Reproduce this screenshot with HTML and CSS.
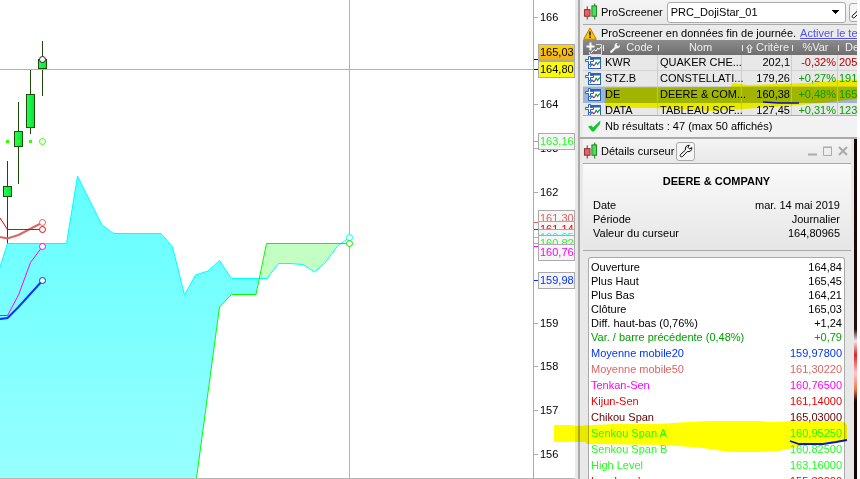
FILE: index.html
```html
<!DOCTYPE html>
<html lang="fr">
<head>
  <meta charset="UTF-8" />
  <meta name="viewport" content="width=device-width, initial-scale=1.0"/>
  <title>ProScreener - DEERE &amp; COMPANY</title>
  <link rel="stylesheet" href="styles.css">
</head>
<body>

<!-- Icônes communes -->
<svg class="defs" aria-hidden="true">
  <symbol id="bougies" viewBox="0 0 16 18">
    <path d="M4.500 3v14" stroke="#7a2020"/>
    <rect x="1.500" y="6.500" width="6" height="7" fill="#e06464" stroke="#8c2828"/>
    <path d="M12.500 0v17" stroke="#1c641c"/>
    <rect x="9.500" y="2.500" width="5" height="11" fill="#4be05a" stroke="#1c781c"/>
  </symbol>
  <symbol id="cle" viewBox="0 0 14 14">
    <path d="M1.500 10.500L6.500 6C5.800 3.500 7.500 1 10.300 1.300L8.800 3.200L10.600 5L12.800 3.600C13.200 6.300 10.800 8.200 8.200 7.600L3.500 12.500C2 13.500 0.500 12 1.500 10.500Z" stroke-linejoin="round"/>
  </symbol>
  <symbol id="ajout" viewBox="0 0 16 13">
    <rect x="3.500" y="1.500" width="12" height="11" fill="#fff" stroke="#2a62b8"/>
    <path d="M4 2.500h11" stroke="#2a62b8" stroke-width="2"/>
    <path d="M5 11L7 8L9 10" fill="none" stroke="#2a62b8" stroke-width="1.300"/>
    <path d="M9 10L11.500 6" fill="none" stroke="#e03030" stroke-width="1.300"/>
    <path d="M11 6L12.500 8.500L15 5.500" fill="none" stroke="#22a040" stroke-width="1.300"/>
    <path d="M3.500 0.500h2v3h3v2h-3v3h-2v-3h-3v-2h3z" fill="#fff" stroke="#2a62b8"/>
  </symbol>
</svg>

<main class="ecran">
  <!-- Graphique -->
  <section class="graphique">
    <svg class="courbes" viewBox="0 0 533 478" preserveAspectRatio="xMinYMin slice">
      <defs>
        <linearGradient id="nuage" x1="0" y1="0" x2="0" y2="1">
          <stop offset="0" stop-color="#62ffff"/>
          <stop offset="1" stop-color="#98ffff"/>
        </linearGradient>
        <linearGradient id="hausse">
          <stop offset="0" stop-color="#28ff50"/>
          <stop offset="1" stop-color="#00e63c"/>
        </linearGradient>
      </defs>
      <g stroke="#1e4b0a" fill="url(#hausse)">
        <path d="M7.500 161V245M18.500 102V184M30.500 70V134M42.500 41V96"/>
        <rect x="3.500" y="186.500" width="8" height="10"/>
        <rect x="14.500" y="131.500" width="8" height="15"/>
        <rect x="26.500" y="94.500" width="8" height="33"/>
        <rect x="38.500" y="59.500" width="8" height="9"/>
      </g>
      <path fill="url(#nuage)" d="M0 267L7.500 243.500H66.500L77.500 176L102 225L113.500 233.500H161L172.500 247L184.500 295L195.500 275L208 271L219.500 260.500L231.500 278.500H259L256 294.500H231.500L219.500 307L196.500 478H0Z"/>
      <path fill="#c3ffc3" d="M259 278.500L266.500 243.500H340L337.500 246L325 263L314.500 272L303 264.500L278.500 263.500L267 278.500Z"/>
      <path class="trait cyan" d="M0 267L7.500 243.500H66.500L77.500 176L102 225L113.500 233.500H161L172.500 247L184.500 295L195.500 275L208 271L219.500 260.500L231.500 278.500H267L278.500 263.500H290L303 264.500L314.500 272L325 263L337.500 246L349.500 237.500"/>
      <path class="trait vert" d="M196.500 478L219.500 307L231.500 294.500H256L266.500 243.500H349.500"/>
      <path class="trait rose" stroke-width="2" d="M0 237L7.500 238.500L18.500 235L42.500 222.500"/>
      <path class="trait rouge" d="M0 218L7.500 229.500H42.500"/>
      <path class="trait magenta" d="M0 315.500H7.500L18.500 295L30.500 262.500L42.500 246.500"/>
      <path class="trait bleu" stroke-width="2" d="M0 319L7.500 318L18.500 307L42.500 280.500"/>
      <path fill="#32ff00" d="M6 140h3v3h-3zM17 140h3v3h-3zM29 140h3v3h-3z"/>
      <path class="reticule" d="M0 69.500H533M349.500 0V478"/>
      <g fill="#fff">
        <circle cx="42.500" cy="59.500" r="3" stroke="#222"/>
        <circle cx="42.500" cy="141.500" r="3" stroke="#32ff00"/>
        <circle cx="42.500" cy="222.500" r="3" stroke="#dc6464"/>
        <circle cx="42.500" cy="229.500" r="3" stroke="#f00"/>
        <circle cx="42.500" cy="246.500" r="3" stroke="#ff00ff"/>
        <circle cx="42.500" cy="280.500" r="3" stroke="#0032ff"/>
        <circle cx="349.500" cy="237.500" r="3" stroke="#00ffff"/>
        <circle cx="349.500" cy="243.500" r="3" stroke="#00f000"/>
      </g>
    </svg>
  </section>

  <!-- Echelle des prix -->
  <aside class="echelle">
    <span class="prix" style="top:17px">166</span>
    <span class="prix" style="top:104px">164</span>
    <span class="prix" style="top:148px">163</span>
    <span class="prix" style="top:192px">162</span>
    <span class="prix" style="top:323px">159</span>
    <span class="prix" style="top:366px">158</span>
    <span class="prix" style="top:410px">157</span>
    <span class="prix" style="top:454px">156</span>
    <i class="marque noir" style="top:59px"></i>
    <i class="marque noir" style="top:69px"></i>
    <i class="marque vert" style="top:141px"></i>
    <i class="marque rose" style="top:222px"></i>
    <i class="marque rouge" style="top:229px"></i>
    <i class="marque cyan" style="top:237px"></i>
    <i class="marque vert" style="top:243px"></i>
    <i class="marque magenta" style="top:246px"></i>
    <i class="marque bleu" style="top:280px"></i>
    <span class="cote fond-or" style="top:44px">165,03</span>
    <span class="cote fond-jaune" style="top:61px">164,80</span>
    <span class="cote vert" style="top:133px">163,16</span>
    <span class="cote rose" style="top:210px">161,30</span>
    <span class="cote rouge" style="top:221px">161,14</span>
    <span class="cote cyan" style="top:229px">160,95</span>
    <span class="cote vert" style="top:235px">160,82</span>
    <span class="cote magenta" style="top:244px">160,76</span>
    <span class="cote bleu" style="top:272px">159,98</span>
  </aside>

  <div class="panneaux">
    <!-- ProScreener -->
    <section class="screener">
      <header class="titre">
        <svg class="ico-bougies"><use href="#bougies"/></svg>
        <label for="liste">ProScreener</label>
        <select id="liste"><option>PRC_DojiStar_01</option></select>
        <button class="outil" aria-label="Réglages"><svg class="ico-cle"><use href="#cle"/></svg></button>
      </header>
      <p class="avis">
        <svg class="ico-alerte" viewBox="0 0 14 13"><path d="M7 1L13.300 12.300H0.700Z" fill="#ffc400" stroke="#b87a00" stroke-linejoin="round"/><path d="M7 4.500V8.500M7 9.500V11" stroke="#222" stroke-width="1.600"/></svg>
        <span>ProScreener en données fin de journée.</span>
        <a href="#">Activer le temps réel</a>
      </p>
      <div class="liste">
        <table>
          <colgroup><col class="c-ico"><col class="c-code"><col class="c-nom"><col class="c-crit"><col class="c-var"><col></colgroup>
          <thead>
            <tr>
              <th><svg class="ico-ajout" viewBox="0 0 16 13"><path d="M10 2.500H15.500V12.500H3.500V10" fill="none" stroke="#ddd"/><path d="M5 11L8 7.500L10 9L12 6L13 7.500L15 5" fill="none" stroke="#fff"/><path d="M3.500 0.500h2v3h3v2h-3v3h-2v-3h-3v-2h3z" fill="#fff"/></svg></th>
              <th class="sep"><svg class="ico-cle blanc"><use href="#cle"/></svg> Code</th>
              <th class="sep">Nom</th>
              <th class="sep"><svg class="ico-tri" viewBox="0 0 7 9"><path d="M3.500 0.700L6.300 4H4.700V8.400H2.300V4H0.700Z" fill="none" stroke="#fff"/></svg> Critère</th>
              <th class="sep">%Var</th>
              <th class="sep dernier">Der</th>
            </tr>
          </thead>
          <tbody>
            <tr><td><svg class="ico-ajout"><use href="#ajout"/></svg></td><td>KWR</td><td>QUAKER CHE...</td><td class="num">202,1</td><td class="num baisse">-0,32%</td><td class="baisse">205,80</td></tr>
            <tr><td><svg class="ico-ajout"><use href="#ajout"/></svg></td><td>STZ.B</td><td>CONSTELLATI...</td><td class="num">179,26</td><td class="num gain">+0,27%</td><td class="gain">191,49</td></tr>
            <tr class="choisi"><td><svg class="ico-ajout"><use href="#ajout"/></svg></td><td>DE</td><td>DEERE &amp; COM...</td><td class="num">160,38</td><td class="num gain">+0,48%</td><td class="gain">165,03</td></tr>
            <tr><td><svg class="ico-ajout"><use href="#ajout"/></svg></td><td>DATA</td><td>TABLEAU SOF...</td><td class="num">127,45</td><td class="num gain">+0,31%</td><td class="gain">123,21</td></tr>
          </tbody>
        </table>
        <svg class="surligneur" viewBox="0 0 280 80">
          <path fill="#ff0" d="M22 48L148 47L149 43L165 45L226 43L257 40L280 39V58L240 63L216 65L175 68L130 71L70 68H22Z"/>
          <path fill="none" stroke="#0a14c8" stroke-width="1.500" d="M180 62L196 63L216 63"/>
        </svg>
      </div>
      <p class="bilan">
        <svg class="ico-ok" viewBox="0 0 13 12"><path d="M0 6.500L3.500 5.500L5 7.500L12.500 0.500L12 4L6 11.500H4Z" fill="#0fc828"/></svg>
        Nb résultats : 47 (max 50 affichés)
      </p>
    </section>

    <!-- Détails curseur -->
    <section class="details">
      <div class="fenetre">
        <header class="titre">
          <svg class="ico-bougies"><use href="#bougies"/></svg>
          <span>Détails curseur</span>
          <button class="outil" aria-label="Réglages"><svg class="ico-cle"><use href="#cle"/></svg></button>
          <div class="boutons">
            <button aria-label="Réduire"><svg viewBox="0 0 10 10"><path d="M0 8.500H9" stroke-width="2"/></svg></button>
            <button aria-label="Agrandir"><svg viewBox="0 0 10 10"><path d="M0.500 1.500H8.500V9.500H0.500ZM0 1H9"/></svg></button>
            <button aria-label="Fermer"><svg viewBox="0 0 10 10"><path d="M1 1L9 9M9 1L1 9" stroke-width="2"/></svg></button>
          </div>
        </header>
        <div class="resume">
          <h1>DEERE &amp; COMPANY</h1>
          <table>
            <tr><th>Date</th><td>mar. 14 mai 2019</td></tr>
            <tr><th>Période</th><td>Journalier</td></tr>
            <tr><th>Valeur du curseur</th><td>164,80965</td></tr>
          </table>
        </div>
        <div class="valeurs">
          <table class="cours">
            <tr><th>Ouverture</th><td>164,84</td></tr>
            <tr><th>Plus Haut</th><td>165,45</td></tr>
            <tr><th>Plus Bas</th><td>164,21</td></tr>
            <tr><th>Clôture</th><td>165,03</td></tr>
            <tr><th>Diff. haut-bas (0,76%)</th><td>+1,24</td></tr>
            <tr class="gain"><th>Var. / barre précédente (0,48%)</th><td>+0,79</td></tr>
          </table>
          <table class="indicateurs">
            <tr class="bleu"><th>Moyenne mobile20</th><td>159,97800</td></tr>
            <tr class="rose"><th>Moyenne mobile50</th><td>161,30220</td></tr>
            <tr class="magenta"><th>Tenkan-Sen</th><td>160,76500</td></tr>
            <tr class="rouge"><th>Kijun-Sen</th><td>161,14000</td></tr>
            <tr class="brun"><th>Chikou Span</th><td>165,03000</td></tr>
            <tr class="vert"><th>Senkou Span A</th><td>160,95250</td></tr>
            <tr class="vert"><th>Senkou Span B</th><td>160,82500</td></tr>
            <tr class="vert"><th>High Level</th><td>163,16000</td></tr>
            <tr class="rouge"><th>Low Level</th><td>155,32000</td></tr>
          </table>
          <svg class="surligneur bas" viewBox="0 0 300 40">
            <path fill="#ff0" d="M0 5H20L21 6L59 4H102L135 2L155 1H205L219 2L239 1H289L293 5V20L252 25L225 31L205 32H175L149 28L112 25L32 24V22H0Z"/>
            <path fill="none" stroke="#0a14c8" stroke-width="1.800" d="M236 21L245 24H269L282 22L293 20"/>
          </svg>
        </div>
      </div>
      <div class="bureau"></div>
    </section>
  </div>
</main>

</body>
</html>
```
FILE: styles.css
```css
* { margin: 0; padding: 0; box-sizing: border-box; }
body {
  background-color: white;
  overflow: hidden;
  font-family: "Liberation Sans", Arial, sans-serif;
  font-size: 11px;
  line-height: 14px;
  color: #000;
}

svg { display: block; flex: none; }
.defs { position: absolute; width: 0; height: 0; }
button { border: none; background: none; font: inherit; cursor: pointer; }

.ecran {
  display: flex;
  height: 100vh;
  padding-right: 3px;
}

/* Couleurs des indicateurs */
.noir { color: #000; }
.vert { color: #1eff1e; }
.rose { color: #dc6464; }
.rouge { color: #f00000; }
.cyan { color: #00ffff; }
.magenta { color: #ff00ff; }
.bleu { color: #0032ff; }
.brun { color: #640000; }
.gain { color: #00a000; }
.baisse { color: #b40000; }

/* Graphique */
.graphique {
  flex: 1;
  min-width: 0;
  border-bottom: 1px solid #b4b4b4;
}
.courbes { width: 100%; height: 100%; }
.trait { fill: none; stroke: currentColor; }
.trait.vert { color: #00ff00; }
.reticule { fill: none; stroke: #f59696; }

.echelle {
  position: relative;
  width: 42px;
  border-left: 1px solid #aaa;
  border-bottom: 1px solid #b4b4b4;
  overflow: hidden;
}
.prix {
  position: absolute;
  left: 0;
  padding-left: 6px;
  transform: translateY(-50%);
}
.prix::before {
  content: "";
  position: absolute;
  left: 0;
  top: 7px;
  width: 4px;
  height: 1px;
  background: #aaa;
}
.marque {
  position: absolute;
  left: 0;
  width: 4px;
  height: 1px;
  background: currentColor;
}
.cote {
  position: absolute;
  left: 4px;
  width: 37px;
  height: 17px;
  padding-left: 1px;
  line-height: 15px;
  border: 1px solid #aaa;
  background: #f5f5f5;
}
.fond-or { background: linear-gradient(#ffd200, #f0af1e); }
.fond-jaune { background: #fafa0a; }

/* Colonne de droite */
.panneaux {
  width: 282px;
  display: flex;
  flex-direction: column;
  border-left: 3px solid #e8e8e8;
  min-height: 0;
}
.screener {
  border-left: 2px solid #aaa;
  padding-left: 3px;
  background: #ebebeb;
  border-bottom: 2px solid #aaa;
  overflow: hidden;
}
.titre {
  display: flex;
  align-items: center;
  height: 25px;
  gap: 3px;
  white-space: nowrap;
  background: linear-gradient(#f5f5f5, #e8e8e8);
  border-bottom: 1px solid #aaa;
}
.ico-bougies { width: 15px; height: 18px; }
.titre select {
  flex: none;
  width: 179px;
  height: 21px;
  margin-left: 1px;
  padding: 0 3px;
  font: inherit;
  color: #000;
  appearance: none;
  border: 1px solid #aaa;
  border-radius: 3px;
  background: linear-gradient(45deg, transparent 50%, #000 50%) no-repeat right 9px center / 4px 4px,
    linear-gradient(315deg, transparent 50%, #000 50%) no-repeat right 5px center / 4px 4px, #fff;
}
.outil {
  display: flex;
  flex: none;
  align-items: center;
  justify-content: center;
  width: 19px;
  height: 19px;
  border: 1px solid #aaa;
  border-radius: 3px;
  background: #f5f5f5;
}
.ico-cle {
  width: 14px;
  height: 14px;
  fill: #fff;
  stroke: #000;
}
.avis {
  display: flex;
  align-items: center;
  gap: 4px;
  height: 15px;
  line-height: 15px;
  padding-top: 1px;
  white-space: nowrap;
}
.ico-alerte { width: 14px; height: 13px; }
.avis a { color: #5050f0; }

.liste {
  position: relative;
  height: 76px;
  overflow: hidden;
  border-bottom: 1px solid #aaa;
}
.liste table {
  width: 100%;
  table-layout: fixed;
  border-collapse: separate;
  border-spacing: 0;
}
.c-ico { width: 20px; }
.c-code { width: 55px; }
.c-nom { width: 84px; }
.c-crit { width: 50px; }
.c-var { width: 46px; }
.liste th {
  height: 15px;
  font-weight: normal;
  color: #f0f0f0;
  line-height: 15px;
  white-space: nowrap;
  padding-left: 1px;
}
.liste thead { background: linear-gradient(#8c8c8c, #6e6e6e); }
.liste .sep {
  background: linear-gradient(#f0f0f0, #f0f0f0) no-repeat left center / 1px 6px;
}
.liste .dernier { text-align: left; padding-left: 7px; }
.liste th svg { display: inline-block; vertical-align: middle; }
.liste .blanc { width: 12px; height: 12px; fill: #f0f0f0; stroke: none; margin-right: 2px; }
.ico-tri { width: 7px; height: 9px; }
.liste td {
  height: 16px;
  padding: 0 0 0 2px;
  line-height: 15px;
  white-space: nowrap;
  border-right: 1px solid #cdcdcd;
  border-bottom: 1px solid #d2d2d2;
  background: #e8e8e8;
}
.liste td:first-child { padding: 0 0 0 2px; border-right: none; }
.liste td:last-child { padding: 0 0 0 1px; border-right: none; }
.liste .num { text-align: right; padding: 0 1px; }
.liste .choisi td { background: #a0b4d8; border-bottom-color: #a0b4d8; }
.ico-ajout { width: 16px; height: 13px; }

.surligneur {
  position: absolute;
  left: 0;
  top: 0;
  width: 280px;
  height: 80px;
  mix-blend-mode: multiply;
  pointer-events: none;
}

.bilan {
  display: flex;
  align-items: center;
  gap: 4px;
  height: 21px;
  padding: 0 0 1px 5px;
  background: #f2f2f2;
}
.ico-ok { width: 13px; height: 12px; }

/* Fenêtre Détails curseur */
.details {
  flex: 1;
  min-height: 0;
  display: flex;
}
.fenetre {
  flex: 1;
  min-width: 0;
  display: flex;
  flex-direction: column;
  border-left: 2px solid #aaa;
  padding: 0 3px;
  background: #e8e8e8;
}
.fenetre .outil { margin-left: -1px; }
.boutons {
  display: flex;
  gap: 5px;
  margin-left: auto;
  padding-right: 3px;
}
.boutons svg { width: 10px; height: 10px; fill: none; stroke: #aaa; }

.resume {
  padding: 10px 11px 10px 10px;
  background: linear-gradient(#fafafa, #e6e6e6);
  border-bottom: 1px solid #aaa;
}
.resume h1 {
  font-size: 11px;
  line-height: 14px;
  text-align: center;
  margin-bottom: 10px;
}
.details table { width: 100%; border-collapse: collapse; }
.details th { font-weight: normal; text-align: left; height: 14px; }
.details td { text-align: right; }

.valeurs {
  position: relative;
  flex: 1;
  min-height: 0;
  margin: 6px 6px 0 5px;
  padding: 2px;
  border: 1px solid #aaa;
  border-bottom: none;
  border-radius: 3px 3px 0 0;
  background: #fff;
}
.details .indicateurs { margin-top: 1px; }
.details .indicateurs th { height: 16px; }
.details .bas {
  left: -35px;
  top: 162px;
  width: 300px;
  height: 40px;
}

/* Bout de fond d'écran visible à droite */
.bureau {
  width: 3px;
  background: linear-gradient(#140505 0, #280a0a 190px, #f0e6f0 202px, #e61e1e 216px, #ffc8c8 234px, #f07850 250px, #1e0505 262px, #140505 100%);
}
```
